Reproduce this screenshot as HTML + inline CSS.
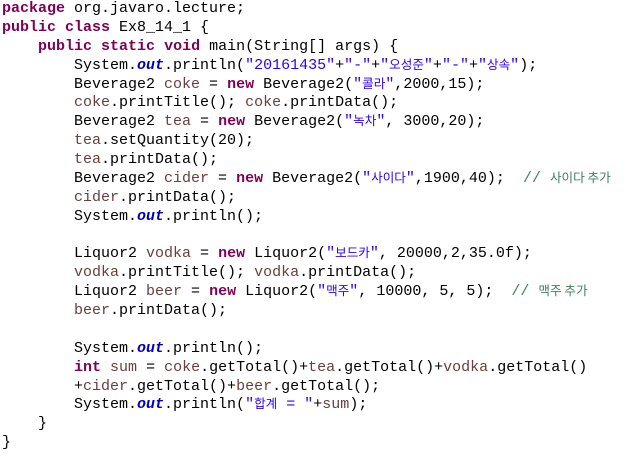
<!DOCTYPE html>
<html><head><meta charset="utf-8"><style>
html,body{margin:0;padding:0;background:#fff;width:629px;height:457px;overflow:hidden}
pre{margin:0;padding:0 0 0 2px;font-family:"Liberation Mono",monospace;font-size:15px;line-height:18.87px;color:#000;white-space:pre}
.k{color:#7f0055;font-weight:bold}
.s{color:#2a00ff}
.f{color:#0000c0;font-weight:bold;font-style:italic}
.v{color:#6a3e3e}
.c{color:#3f7f5f}
.h{font-family:"Noto Sans CJK KR","NanumGothic",sans-serif;font-size:12.6px;line-height:8px}
</style></head><body><pre><span class="k">package</span> org.javaro.lecture;
<span class="k">public</span> <span class="k">class</span> Ex8_14_1 {
    <span class="k">public</span> <span class="k">static</span> <span class="k">void</span> main(String[] args) {
        System.<span class="f">out</span>.println(<span class="s">"20161435"</span>+<span class="s">"-"</span>+<span class="s">"<span class="h">오성준</span>"</span>+<span class="s">"-"</span>+<span class="s">"<span class="h">상속</span>"</span>);
        Beverage2 <span class="v">coke</span> = <span class="k">new</span> Beverage2(<span class="s">"<span class="h">콜라</span>"</span>,2000,15);
        <span class="v">coke</span>.printTitle(); <span class="v">coke</span>.printData();
        Beverage2 <span class="v">tea</span> = <span class="k">new</span> Beverage2(<span class="s">"<span class="h">녹차</span>"</span>, 3000,20);
        <span class="v">tea</span>.setQuantity(20);
        <span class="v">tea</span>.printData();
        Beverage2 <span class="v">cider</span> = <span class="k">new</span> Beverage2(<span class="s">"<span class="h">사이다</span>"</span>,1900,40);  <span class="c">// <span class="h">사이다 추가</span></span>
        <span class="v">cider</span>.printData();
        System.<span class="f">out</span>.println();

        Liquor2 <span class="v">vodka</span> = <span class="k">new</span> Liquor2(<span class="s">"<span class="h">보드카</span>"</span>, 20000,2,35.0f);
        <span class="v">vodka</span>.printTitle(); <span class="v">vodka</span>.printData();
        Liquor2 <span class="v">beer</span> = <span class="k">new</span> Liquor2(<span class="s">"<span class="h">맥주</span>"</span>, 10000, 5, 5);  <span class="c">// <span class="h">맥주 추가</span></span>
        <span class="v">beer</span>.printData();

        System.<span class="f">out</span>.println();
        <span class="k">int</span> <span class="v">sum</span> = <span class="v">coke</span>.getTotal()+<span class="v">tea</span>.getTotal()+<span class="v">vodka</span>.getTotal()
        +<span class="v">cider</span>.getTotal()+<span class="v">beer</span>.getTotal();
        System.<span class="f">out</span>.println(<span class="s">"<span class="h">합계</span> = "</span>+<span class="v">sum</span>);
    }
}</pre></body></html>
